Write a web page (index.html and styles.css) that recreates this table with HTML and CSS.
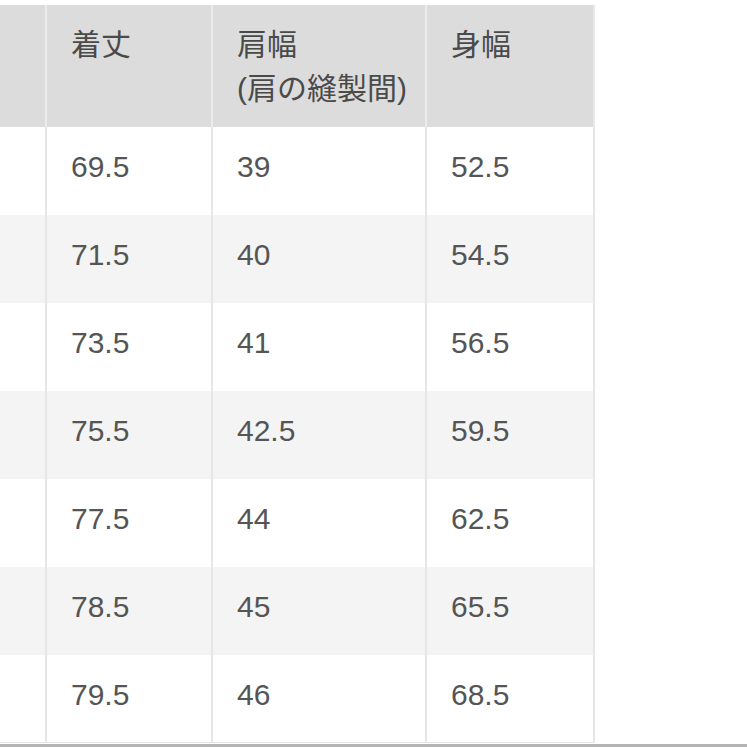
FILE: index.html
```html
<!DOCTYPE html>
<html lang="ja">
<head>
<meta charset="utf-8">
<title>サイズ表</title>
<link rel="stylesheet" href="styles.css">
</head>
<body>
<table class="size-table">
  <colgroup>
    <col class="c1"><col class="c2"><col class="c3"><col class="c4">
  </colgroup>
  <thead>
    <tr class="head">
      <th></th>
      <th>着丈</th>
      <th>肩幅<br>(肩の縫製間)</th>
      <th>身幅</th>
    </tr>
  </thead>
  <tbody>
    <tr><td></td><td>69.5</td><td>39</td><td>52.5</td></tr>
    <tr class="alt"><td></td><td>71.5</td><td>40</td><td>54.5</td></tr>
    <tr><td></td><td>73.5</td><td>41</td><td>56.5</td></tr>
    <tr class="alt"><td></td><td>75.5</td><td>42.5</td><td>59.5</td></tr>
    <tr><td></td><td>77.5</td><td>44</td><td>62.5</td></tr>
    <tr class="alt"><td></td><td>78.5</td><td>45</td><td>65.5</td></tr>
    <tr><td></td><td>79.5</td><td>46</td><td>68.5</td></tr>
  </tbody>
</table>
<div class="edge"></div>
</body>
</html>
```

FILE: styles.css
```css
html, body {
  margin: 0;
  padding: 0;
  background: #ffffff;
}
body {
  padding-top: 5px;
  font-family: "Liberation Sans", "Noto Sans CJK JP", sans-serif;
  color: #555555;
}
.size-table {
  border-collapse: separate;
  border-spacing: 0;
  table-layout: fixed;
  width: 595px;
}
.c1 { width: 47px; }
.c2 { width: 166px; }
.c3 { width: 214px; }
.c4 { width: 168px; }

.size-table th,
.size-table td {
  text-align: left;
  vertical-align: top;
  padding: 0 0 0 24px;
  font-size: 30px;
  box-sizing: border-box;
}
.size-table th {
  background: #dcdcdc;
  color: #4a4a4a;
  font-weight: normal;
  line-height: 44px;
  padding-top: 18px;
  height: 122px;
  border-right: 2px solid #ececec;
  white-space: nowrap;
}
.size-table th:last-child {
  border-right: 2px solid #e8e8e8;
}
.size-table td {
  height: 88px;
  line-height: 40px;
  padding-top: 20px;
  border-right: 2px solid #e6e6e6;
}
.size-table tr.alt td {
  background: #f4f4f4;
}
.size-table tbody tr:last-child td {
  border-bottom: 1px solid #e4e4e4;
}
.edge {
  margin-top: 1px;
  border-top: 3px solid #b4b4b4;
}
```
